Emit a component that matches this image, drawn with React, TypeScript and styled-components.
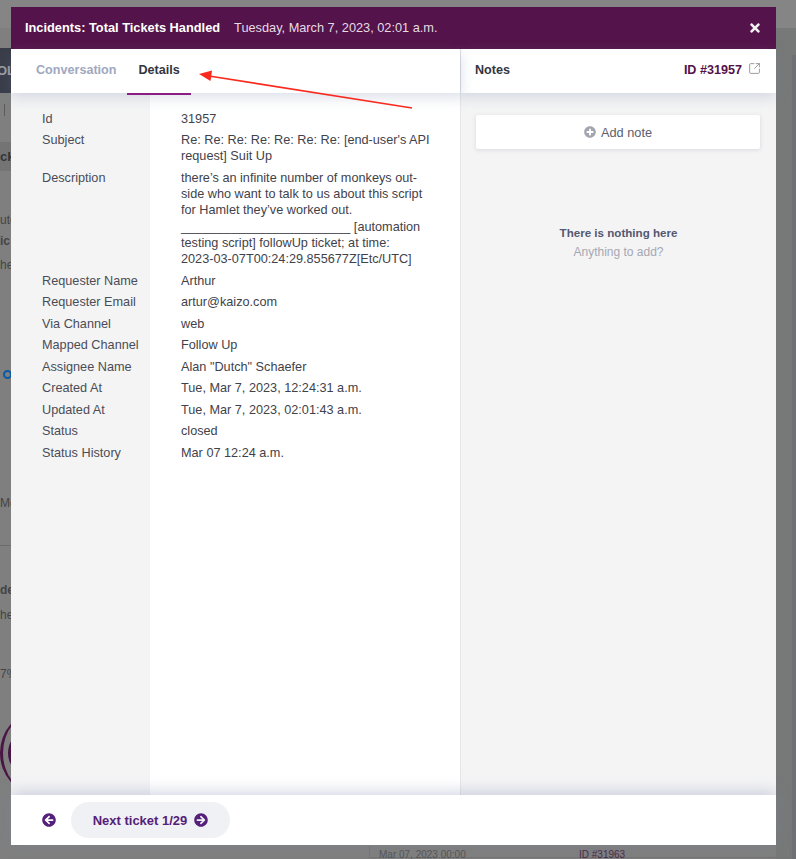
import type { ReactNode } from 'react';
import styled, { createGlobalStyle } from 'styled-components';
import { FaArrowCircleLeft, FaArrowCircleRight, FaPlusCircle, FaTimes } from 'react-icons/fa';
import { SquareArrowOutUpRight } from 'lucide-react';

const GlobalStyle = createGlobalStyle`
  html, body {
    margin: 0;
    padding: 0;
    background: #7f7f7f;
  }

  body {
    font-family: 'Liberation Sans', Arial, sans-serif;
    font-size: 12.7px;
    color: #33363f;
  }
`;

const NoBreak = styled.span`
  white-space: nowrap;
`;

const rows: [string, ReactNode][] = [
  ['Id', '31957'],
  ['Subject', "Re: Re: Re: Re: Re: Re: Re: [end-user's API request] Suit Up"],
  [
    'Description',
    <>
      there’s an infinite number of monkeys out-side who want to talk to us about this script for
      Hamlet they’ve worked out. ________________________ [automation testing script] followUp
      ticket; at time: <NoBreak>2023-03-07T00:24:29.855677Z[Etc/UTC]</NoBreak>
    </>,
  ],
  ['Requester Name', 'Arthur'],
  ['Requester Email', 'artur@kaizo.com'],
  ['Via Channel', 'web'],
  ['Mapped Channel', 'Follow Up'],
  ['Assignee Name', 'Alan "Dutch" Schaefer'],
  ['Created At', 'Tue, Mar 7, 2023, 12:24:31 a.m.'],
  ['Updated At', 'Tue, Mar 7, 2023, 02:01:43 a.m.'],
  ['Status', 'closed'],
  ['Status History', 'Mar 07 12:24 a.m.'],
];

export default function App() {
  return (
    <>
      <GlobalStyle />
      <Page>
        <BehindPage aria-hidden="true">
          <TopBar />
          <DarkBand>OL</DarkBand>
          <Divider />
          <PeekBand>ck</PeekBand>
          <Peek $top={212}>uto</Peek>
          <Peek $top={233} $bold>ic</Peek>
          <Peek $top={257}>he</Peek>
          <BlueDot />
          <Peek $top={495}>Mo</Peek>
          <Rule />
          <Peek $top={582} $bold>de</Peek>
          <Peek $top={607}>he</Peek>
          <Peek $top={666}>7%</Peek>
          <Ring />
          <RightGutter />
          <RightColumn />
          <BottomTable>
            <BottomText>Mar 07, 2023 00:00</BottomText>
            <BottomId>ID #31963</BottomId>
          </BottomTable>
        </BehindPage>

        <Modal>
          <Header>
            <Title>Incidents: Total Tickets Handled</Title>
            <Timestamp>Tuesday, March 7, 2023, 02:01 a.m.</Timestamp>
            <CloseButton title="Close">
              <FaTimes size={14} />
            </CloseButton>
          </Header>

          <Body>
            <LeftPane>
              <Tabs>
                <Tab>Conversation</Tab>
                <Tab $active>Details</Tab>
              </Tabs>
              <DetailsTable>
                {rows.map(([label, value]) => (
                  <DetailRow key={label}>
                    <DetailLabel>{label}</DetailLabel>
                    <DetailValue>{value}</DetailValue>
                  </DetailRow>
                ))}
                <DetailFiller />
              </DetailsTable>
            </LeftPane>

            <RightPane>
              <NotesHeader>
                <NotesTitle>Notes</NotesTitle>
                <TicketLink>
                  ID #31957
                  <SquareArrowOutUpRight size={13} color="#8c8c92" strokeWidth={1.6} />
                </TicketLink>
              </NotesHeader>
              <AddNote>
                <FaPlusCircle size={12} color="#a2a5ad" />
                Add note
              </AddNote>
              <EmptyTitle>There is nothing here</EmptyTitle>
              <EmptyHint>Anything to add?</EmptyHint>
            </RightPane>
          </Body>

          <Footer>
            <PrevButton title="Previous ticket">
              <FaArrowCircleLeft size={14} />
            </PrevButton>
            <NextButton>
              Next ticket 1/29
              <FaArrowCircleRight size={14} />
            </NextButton>
          </Footer>

          <Annotation width="230" height="50" viewBox="0 0 230 50">
            <line x1="223" y1="51" x2="20" y2="19" stroke="#fb2a1e" strokeWidth="1.6" />
            <polygon points="10,17 23,13.5 21.5,24" fill="#fb2a1e" />
          </Annotation>
        </Modal>
      </Page>
    </>
  );
}

const Page = styled.div`
  position: relative;
  width: 796px;
  height: 859px;
  padding: 7px 20px 14px 11px;
  box-sizing: border-box;
  overflow: hidden;
`;

const BehindPage = styled.div`
  position: absolute;
  inset: 0;
  background: #7f7f7f;
`;

const TopBar = styled.div`
  position: absolute;
  left: 0;
  right: 0;
  top: 0;
  height: 28px;
  background: #858585;
`;

const DarkBand = styled.div`
  position: absolute;
  left: 0;
  top: 48px;
  width: 40px;
  height: 45px;
  background: linear-gradient(90deg, #3a3d49, #2d303c);
  color: #9a9ca4;
  font-size: 13px;
  font-weight: bold;
  line-height: 45px;
  text-indent: -3px;
`;

const Divider = styled.div`
  position: absolute;
  left: 4px;
  top: 104px;
  width: 1px;
  height: 12px;
  background: #5a5a5a;
`;

const PeekBand = styled.div`
  position: absolute;
  left: 0;
  top: 142px;
  width: 40px;
  height: 29px;
  background: #747474;
  color: #33353a;
  font-size: 13px;
  font-weight: bold;
  line-height: 29px;
`;

const Peek = styled.div<{ $top: number; $bold?: boolean }>`
  position: absolute;
  left: 0;
  top: ${p => p.$top}px;
  color: #444;
  font-size: 12px;
  font-weight: ${p => (p.$bold ? 'bold' : 'normal')};
  line-height: 16px;
  white-space: nowrap;
`;

const BlueDot = styled.div`
  position: absolute;
  left: 3px;
  top: 370px;
  width: 5px;
  height: 5px;
  border: 2.5px solid #0a5aa8;
  border-radius: 50%;
`;

const Rule = styled.div`
  position: absolute;
  left: 0;
  top: 545px;
  width: 11px;
  height: 1px;
  background: #6c6c6c;
`;

const Ring = styled.div`
  position: absolute;
  left: 0;
  top: 713px;
  width: 70px;
  height: 80px;
  border-left: 3px solid #4a1444;
  border-radius: 50%;
  box-sizing: border-box;

  &::after {
    content: '';
    position: absolute;
    left: 5px;
    top: 20px;
    width: 30px;
    height: 40px;
    border-left: 3px solid #4a1444;
    border-radius: 50%;
  }
`;

const RightGutter = styled.div`
  position: absolute;
  right: 0;
  top: 28px;
  bottom: 0;
  width: 20px;
  background: #777978;
`;

const RightColumn = styled.div`
  position: absolute;
  right: 0;
  top: 55px;
  bottom: 0;
  width: 4px;
  background: #6f7075;
`;

const BottomTable = styled.div`
  position: absolute;
  left: 369px;
  right: 5px;
  top: 846px;
  height: 11px;
  border: 1px solid #747474;
  border-top: 0;
`;

const BottomText = styled.div`
  position: absolute;
  left: 9px;
  top: 4px;
  color: #555;
  font-size: 10px;
  line-height: 9px;
`;

const BottomId = styled.div`
  position: absolute;
  left: 209px;
  top: 4px;
  color: #4a2a4a;
  font-size: 10px;
  line-height: 9px;
`;

const Modal = styled.div`
  position: relative;
  display: flex;
  flex-direction: column;
  height: 838px;
  background: #fff;
`;

const Header = styled.header`
  display: flex;
  align-items: center;
  flex: 0 0 42px;
  box-sizing: border-box;
  padding: 0 14px 2px;
  background: #54134a;
  color: #fff;
`;

const Title = styled.div`
  font-size: 12.8px;
  font-weight: bold;
`;

const Timestamp = styled.div`
  margin-left: 14px;
  color: #e6dbe5;
  font-size: 12.75px;
`;

const CloseButton = styled.button`
  display: flex;
  margin: 2px 0 0 auto;
  padding: 0;
  border: 0;
  background: none;
  color: #f0f0f0;
`;

const Body = styled.div`
  display: flex;
  flex: 1;
  min-height: 0;
`;

const LeftPane = styled.section`
  display: flex;
  flex-direction: column;
  width: 449px;
  border-right: 1px solid #e6e6e8;
`;

const Tabs = styled.nav`
  position: relative;
  display: flex;
  flex: 0 0 44px;
  padding-left: 14px;
  font-size: 12.6px;
  background: #fff;
  box-shadow: 0 4px 14px rgba(120, 135, 170, 0.28);
`;

const Tab = styled.div<{ $active?: boolean }>`
  position: relative;
  padding: 0 11px;
  color: ${p => (p.$active ? '#33363f' : '#a0a8c0')};
  font-weight: bold;
  line-height: 42px;

  ${p =>
    p.$active &&
    `&::after {
      content: '';
      position: absolute;
      left: 0;
      right: 0;
      bottom: -2px;
      height: 2px;
      background: #8c1d85;
    }`}
`;

const DetailsTable = styled.div`
  display: flex;
  flex: 1;
  flex-direction: column;
  padding-top: 15px;
  background: linear-gradient(90deg, #f4f4f5 139px, #fff 139px);
  line-height: 16.25px;
`;

const DetailRow = styled.div`
  display: grid;
  grid-template-columns: 139px 1fr;
`;

const DetailFiller = styled.div`
  flex: 1;
`;

const DetailLabel = styled.div`
  padding: 2.625px 0 2.625px 31px;
  color: #4a4d57;
`;

const DetailValue = styled.div`
  width: 250px;
  padding: 2.625px 0 2.625px 31px;
  color: #3f424b;
`;

const RightPane = styled.aside`
  display: flex;
  flex: 1;
  flex-direction: column;
  align-items: center;
  background: #f4f4f5;
`;

const NotesHeader = styled.div`
  display: flex;
  flex: 0 0 44px;
  align-items: center;
  justify-content: space-between;
  align-self: stretch;
  box-sizing: border-box;
  padding: 0 15px 3px 14px;
  font-size: 12.6px;
  background: #fff;
  box-shadow: 0 4px 14px rgba(120, 135, 170, 0.28);
`;

const NotesTitle = styled.div`
  color: #33363f;
  font-weight: bold;
`;

const TicketLink = styled.div`
  display: flex;
  align-items: center;
  gap: 6px;
  color: #54134a;
  font-weight: bold;

  svg {
    margin-top: -2px;
  }
`;

const AddNote = styled.button`
  display: flex;
  align-items: center;
  justify-content: center;
  gap: 5px;
  width: 284px;
  height: 34px;
  margin: 22px 1px 0 0;
  border: 0;
  border-radius: 2px;
  background: #fff;
  box-shadow: 0 1px 4px rgba(90, 95, 115, 0.18);
  color: #5c6070;
  font: inherit;
  font-size: 12.75px;
`;

const EmptyTitle = styled.div`
  margin-top: 76px;
  color: #535871;
  font-size: 11.6px;
  font-weight: bold;
  line-height: 16px;
`;

const EmptyHint = styled.div`
  margin-top: 3px;
  color: #a5a8b3;
  font-size: 12px;
  line-height: 16px;
`;

const Footer = styled.footer`
  position: relative;
  display: flex;
  align-items: center;
  flex: 0 0 50px;
  padding-left: 31px;
  background: #fff;
  box-shadow: 0 -3px 14px rgba(120, 135, 170, 0.35);
`;

const PrevButton = styled.button`
  display: flex;
  padding: 0;
  border: 0;
  background: none;
  color: #55207a;
`;

const NextButton = styled.button`
  display: flex;
  align-items: center;
  justify-content: center;
  gap: 7px;
  width: 159px;
  height: 36px;
  margin-left: 15px;
  padding: 0;
  border: 0;
  border-radius: 18px;
  background: #f0f1f4;
  color: #55207a;
  font: inherit;
  font-size: 13px;
  font-weight: bold;
`;

const Annotation = styled.svg`
  position: absolute;
  left: 178px;
  top: 50px;
  overflow: visible;
  pointer-events: none;
`;
